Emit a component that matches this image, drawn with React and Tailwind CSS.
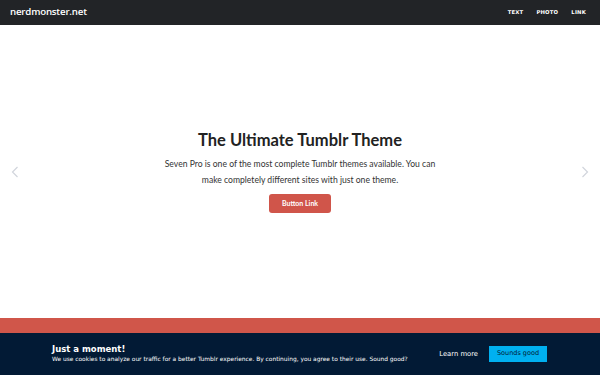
import React from 'react';

function App() {
    return (
        <div className="w-[600px] h-[375px] flex flex-col overflow-hidden bg-white" style={{ fontFamily: 'Lato, sans-serif' }}>
            {/* Header */}
            <header className="h-[25px] shrink-0 bg-[#222427] flex items-center justify-between pl-[10px] pr-[14px]">
                <span className="text-white text-[9.7px] font-semibold tracking-[-0.2px]" style={{ fontFamily: '"Open Sans", sans-serif' }}>
                    nerdmonster.net
                </span>
                <nav className="flex items-center gap-[13px] text-white text-[5.3px] font-bold tracking-[0.2px]" style={{ fontFamily: '"DejaVu Sans", sans-serif' }}>
                    <span>TEXT</span>
                    <span>PHOTO</span>
                    <span>LINK</span>
                </nav>
            </header>

            {/* Hero */}
            <section className="h-[293px] shrink-0 flex items-center justify-between px-[11px]">
                <svg width="8" height="12" viewBox="0 0 8 12" className="text-gray-300">
                    <path d="M6.5 1 L1.5 6 L6.5 11" fill="none" stroke="currentColor" strokeWidth="1.2" />
                </svg>
                <div className="flex flex-col items-center text-center">
                    <h1 className="text-[16.5px] font-bold text-[#222] leading-[20px] mb-[6px]">The Ultimate Tumblr Theme</h1>
                    <p className="text-[8.6px] leading-[16px] text-[#333] w-[290px]">
                        Seven Pro is one of the most complete Tumblr themes available. You can make completely different sites with just one theme.
                    </p>
                    <button className="mt-[6px] h-[19px] w-[62px] rounded-[3px] bg-[#d0554a] text-white text-[7px] font-bold">
                        Button Link
                    </button>
                </div>
                <svg width="8" height="12" viewBox="0 0 8 12" className="text-gray-300">
                    <path d="M1.5 1 L6.5 6 L1.5 11" fill="none" stroke="currentColor" strokeWidth="1.2" />
                </svg>
            </section>

            {/* Red band */}
            <div className="h-[15px] shrink-0 bg-[#d0564a]" />

            {/* Cookie bar */}
            <div className="flex-1 bg-[#021a35] flex items-center pl-[52px] pr-[53px]" style={{ fontFamily: '"DejaVu Sans", sans-serif' }}>
                <div className="flex-1 flex flex-col">
                    <span className="text-white text-[8.5px] font-bold leading-none mb-[4px]">Just a moment!</span>
                    <span className="text-white text-[5.9px] leading-none">
                        We use cookies to analyze our traffic for a better Tumblr experience. By continuing, you agree to their use. Sound good?
                    </span>
                </div>
                <span className="text-white text-[6.8px] mr-[11px]">Learn more</span>
                <button className="h-[16px] w-[58px] bg-[#00b0f0] text-[#021a35] text-[6.5px] font-medium">
                    Sounds good
                </button>
            </div>
        </div>
    );
}

export default App;
